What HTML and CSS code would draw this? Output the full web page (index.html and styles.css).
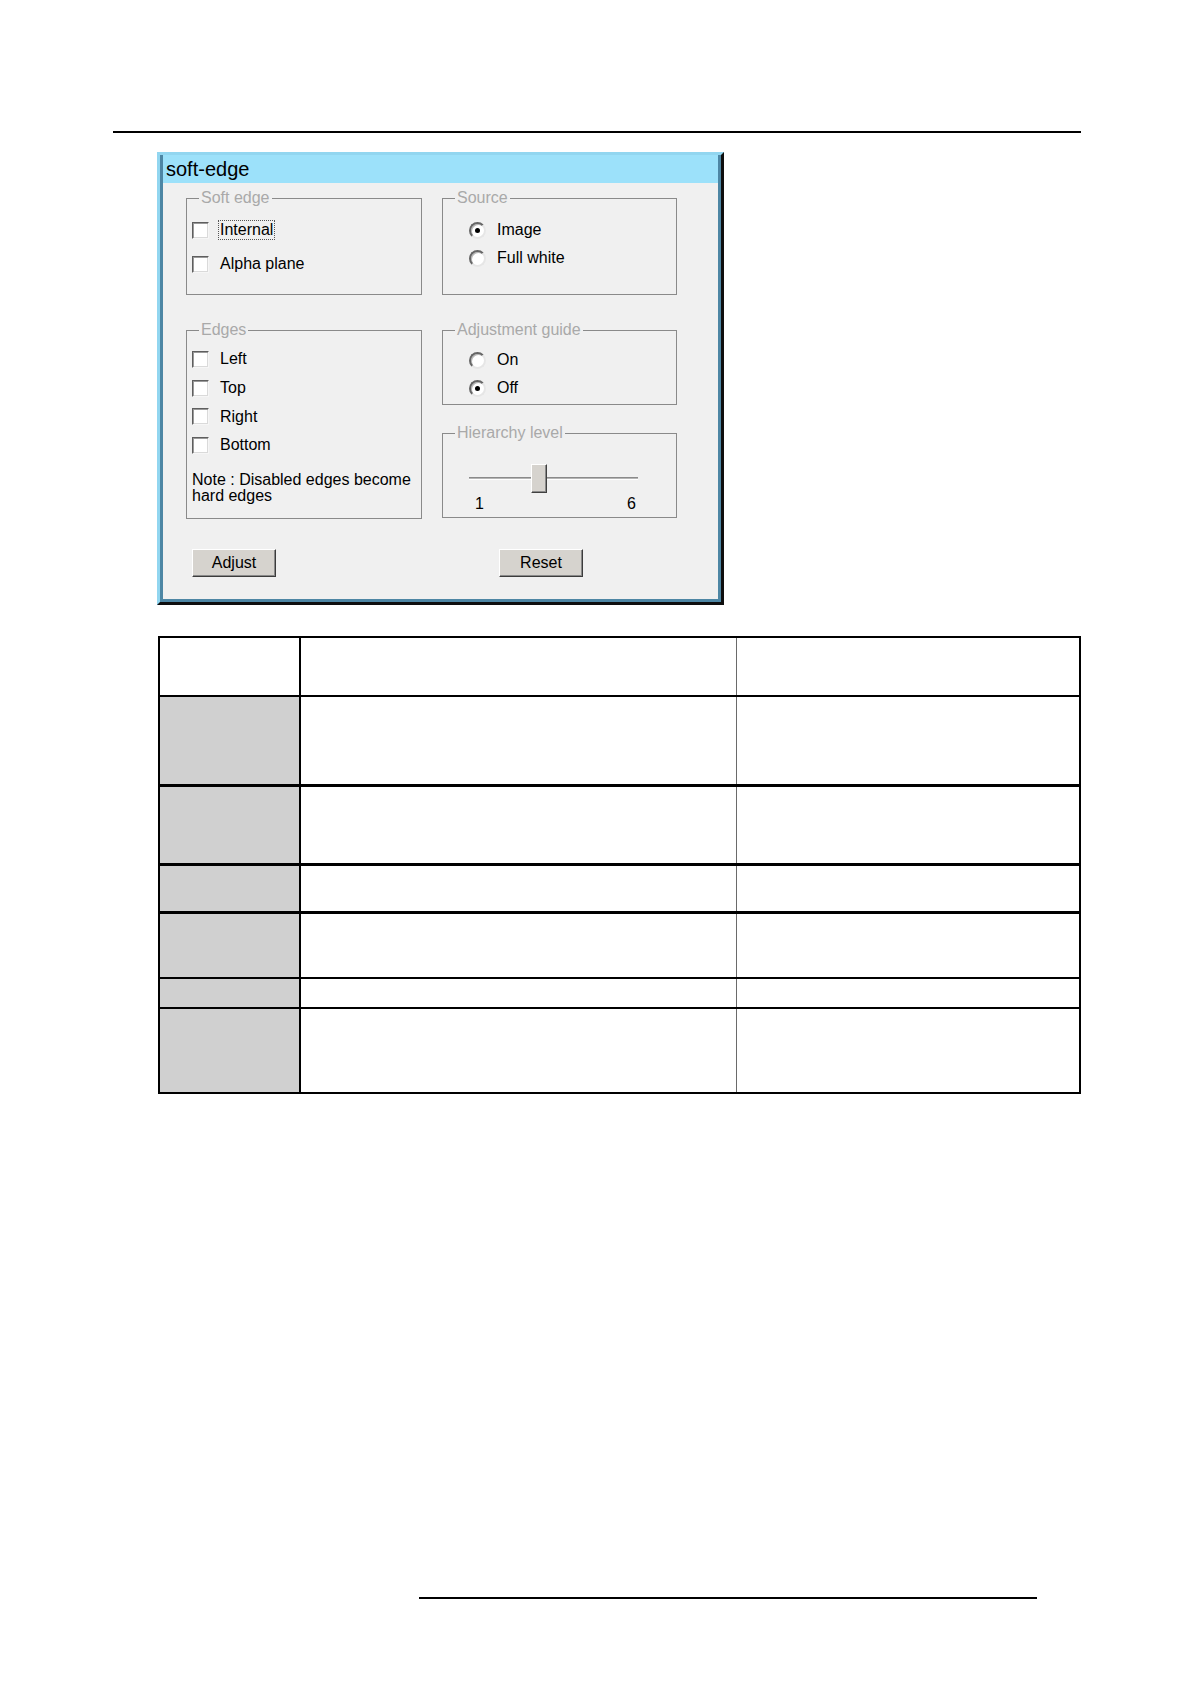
FILE: index.html
```html
<!DOCTYPE html>
<html>
<head>
<meta charset="utf-8">
<title>soft-edge</title>
<link rel="stylesheet" href="styles.css">
</head>
<body>
<div class="page">
  <div class="rule-top"></div>

  <div class="dialog">
    <div class="titlebar">soft-edge</div>
    <div class="dlg-body">
      <div class="cols">
        <div class="col">
          <fieldset class="group g-soft">
            <legend>Soft edge</legend>
            <div class="opt first"><span class="cb"></span><span class="focus">Internal</span></div>
            <div class="opt gap6"><span class="cb"></span><span>Alpha plane</span></div>
          </fieldset>
          <fieldset class="group g-edges">
            <legend>Edges</legend>
            <div class="opt first"><span class="cb"></span><span>Left</span></div>
            <div class="opt"><span class="cb"></span><span>Top</span></div>
            <div class="opt"><span class="cb"></span><span>Right</span></div>
            <div class="opt"><span class="cb"></span><span>Bottom</span></div>
            <p class="note">Note : Disabled edges become hard edges</p>
          </fieldset>
        </div>
        <div class="col">
          <fieldset class="group g-source">
            <legend>Source</legend>
            <div class="opt radio first"><span class="rb on"></span><span>Image</span></div>
            <div class="opt radio"><span class="rb"></span><span>Full white</span></div>
          </fieldset>
          <fieldset class="group g-adj">
            <legend>Adjustment guide</legend>
            <div class="opt radio first"><span class="rb"></span><span>On</span></div>
            <div class="opt radio"><span class="rb on"></span><span>Off</span></div>
          </fieldset>
          <fieldset class="group g-hier">
            <legend>Hierarchy level</legend>
            <div class="slider">
              <div class="track"></div>
              <div class="thumb"></div>
            </div>
            <div class="ticks"><span>1</span><span>6</span></div>
          </fieldset>
        </div>
      </div>
      <div class="actions">
        <button class="btn" type="button">Adjust</button>
        <button class="btn reset" type="button">Reset</button>
      </div>
    </div>
  </div>

  <table class="spec">
    <colgroup>
      <col class="w1"><col class="w2"><col class="w3">
    </colgroup>
    <tr class="r-head"><td class="key white"></td><td></td><td class="last"></td></tr>
    <tr class="r2"><td class="key"></td><td></td><td class="last"></td></tr>
    <tr class="r3 thick"><td class="key"></td><td></td><td class="last"></td></tr>
    <tr class="r4 thick"><td class="key"></td><td></td><td class="last"></td></tr>
    <tr class="r5 thick"><td class="key"></td><td></td><td class="last"></td></tr>
    <tr class="r6"><td class="key"></td><td></td><td class="last"></td></tr>
    <tr class="r7"><td class="key"></td><td></td><td class="last"></td></tr>
  </table>

  <div class="rule-bottom"></div>
</div>
</body>
</html>
```

FILE: styles.css
```css
html, body {
  margin: 0;
  padding: 0;
  background: #ffffff;
}

body {
  font-family: "Liberation Sans", Arial, sans-serif;
  color: #000;
  width: 1190px;
  height: 1684px;
}

.page {
  display: flex;
  flex-direction: column;
  align-items: flex-start;
}

.rule-top {
  width: 968px;
  height: 2px;
  background: #000;
  margin: 131px 0 0 113px;
}

/* ---------- dialog ---------- */
.dialog {
  box-sizing: border-box;
  width: 567px;
  height: 453px;
  margin: 19px 0 0 157px;
  border: 3px solid;
  border-color: #92d6f0 #0e0e0e #0e0e0e #92d6f0;
  background: #4d86a4;
  padding: 0 3px 3px 3px;
  display: flex;
  flex-direction: column;
}

.titlebar {
  height: 28px;
  line-height: 28px;
  background: #9ce1fa;
  font-size: 20px;
  padding-left: 3px;
  color: #000;
}

.dlg-body {
  flex: 1;
  background: #f0f0f0;
  padding: 6px 0 0 23px;
  font-size: 16px;
}

.cols {
  display: grid;
  grid-template-columns: 236px 235px;
  column-gap: 20px;
}

.col {
  display: flex;
  flex-direction: column;
}

.group {
  box-sizing: border-box;
  margin: 0;
  padding: 0 5px;
  min-width: 0;
  border: 1px solid #8a8a8a;
}

.group legend {
  margin-left: 7px;
  padding: 0 2px;
  color: #a9a9a9;
  font-size: 16px;
  line-height: 18px;
}

.g-soft { height: 106px; }
.g-edges { height: 198px; margin-top: 26px; }
.g-source { height: 106px; }
.g-adj { height: 84px; margin-top: 26px; }
.g-hier { height: 94px; margin-top: 19px; }

.opt {
  display: flex;
  align-items: center;
  gap: 11px;
  height: 28px;
  line-height: 18px;
}

.g-edges .opt { height: 28.7px; }

.g-soft .opt.first { margin-top: 9px; }
.opt.gap6 { margin-top: 6px; }
.g-edges .opt.first { margin-top: 6px; }
.g-source .opt.first { margin-top: 9px; }
.g-adj .opt.first { margin-top: 7px; }

.opt.radio { padding-left: 21px; }

.cb {
  box-sizing: border-box;
  width: 17px;
  height: 17px;
  flex: none;
  background: #fff;
  border: 1px solid;
  border-color: #5e5e5e #f6f6f6 #f6f6f6 #5e5e5e;
  box-shadow: inset 1px 1px 0 #9a9a9a, inset -1px -1px 0 #dadada;
}

.rb {
  box-sizing: border-box;
  position: relative;
  width: 17px;
  height: 17px;
  flex: none;
  border-radius: 50%;
  background: #fff;
  border: 2px solid;
  border-color: #666666 #e6e6e6 #e6e6e6 #666666;
  box-shadow: inset 1px 1px 0 #b8b8b8;
}

.rb.on::after {
  content: "";
  position: absolute;
  left: 4px;
  top: 4px;
  width: 5px;
  height: 5px;
  border-radius: 50%;
  background: #000;
}

.focus {
  outline: 1px dotted #555;
  outline-offset: 0;
  padding: 0 1px;
  margin-left: -1px;
}

.note {
  margin: 12px 0 0 0;
  line-height: 16px;
  font-size: 16px;
}

/* slider */
.slider {
  position: relative;
  box-sizing: border-box;
  width: 169px;
  height: 29px;
  padding-top: 13px;
  margin: 22px 0 0 21px;
}

.track {
  height: 1px;
  border-top: 1px solid #8a8a8a;
  border-bottom: 1px solid #ffffff;
  background: #b5b5b5;
}

.thumb {
  position: absolute;
  left: 62px;
  top: 0;
  box-sizing: border-box;
  width: 16px;
  height: 29px;
  background: #d6d3ce;
  border: 1px solid;
  border-color: #ffffff #404040 #404040 #ffffff;
  box-shadow: inset -1px -1px 0 #8a8a8a;
}

.ticks {
  display: flex;
  justify-content: space-between;
  width: 161px;
  margin: 2px 0 0 27px;
  line-height: 18px;
}

/* buttons */
.actions {
  display: flex;
  padding-left: 6px;
  margin-top: 30px;
}

.btn {
  box-sizing: border-box;
  width: 84px;
  height: 28px;
  padding: 0;
  font-family: "Liberation Sans", Arial, sans-serif;
  font-size: 16px;
  color: #000;
  background: #d6d3ce;
  border: 1px solid;
  border-color: #ffffff #3c3c3c #3c3c3c #ffffff;
  box-shadow: inset -1px -1px 0 #8a8a8a;
}

.btn.reset { margin-left: 223px; }

/* ---------- table ---------- */
.spec {
  border-collapse: collapse;
  width: 921px;
  margin: 31px 0 0 158px;
  border: 2px solid #000;
  table-layout: fixed;
}

.w1 { width: 141px; }
.w2 { width: 436px; }
.w3 { width: 344px; }

.spec td {
  padding: 0;
  border-top: 2px solid #000;
  border-left: 1px solid #6a6a6a;
}

.spec td.key {
  background: #d0d0d0;
  border-left: 2px solid #000;
  border-right: 2px solid #000;
}

.spec td.key.white { background: #fff; }

.spec td.last { border-right: 2px solid #000; }

.spec tr.thick td { border-top: 3px solid #000; }

.r-head { height: 59px; }
.r2 { height: 89px; }
.r3 { height: 79px; }
.r4 { height: 48px; }
.r5 { height: 66px; }
.r6 { height: 30px; }
.r7 { height: 85px; }

.rule-bottom {
  width: 618px;
  height: 2px;
  background: #000;
  margin: 503px 0 0 419px;
}
```
